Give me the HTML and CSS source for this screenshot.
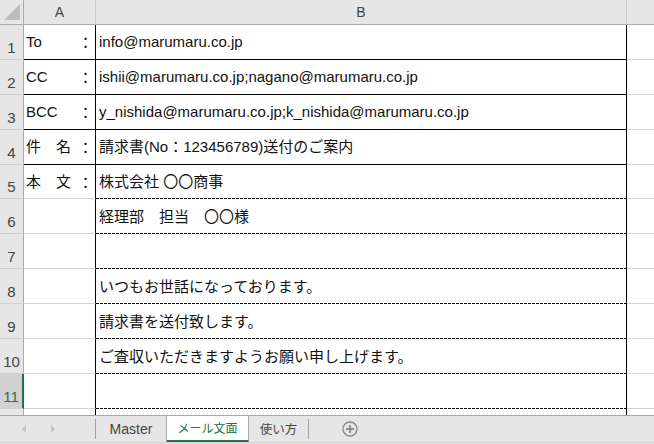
FILE: index.html
```html
<!DOCTYPE html>
<html lang="ja">
<head>
<meta charset="utf-8">
<title>メール文面</title>
<link rel="stylesheet" href="styles.css">
</head>
<body>
<div class="sheet">
  <div class="corner"><span class="tri"></span></div>
  <div class="colhead">A</div>
  <div class="colhead">B</div>
  <div class="colhead last"></div>

  <div class="rowhead">1</div>
  <div class="cell a solid"><span>To</span><span class="colon">：</span></div>
  <div class="cell b solid">info@marumaru.co.jp</div>
  <div class="cell c"></div>

  <div class="rowhead">2</div>
  <div class="cell a solid"><span>CC</span><span class="colon">：</span></div>
  <div class="cell b solid">ishii@marumaru.co.jp;nagano@marumaru.co.jp</div>
  <div class="cell c"></div>

  <div class="rowhead">3</div>
  <div class="cell a solid"><span>BCC</span><span class="colon">：</span></div>
  <div class="cell b solid">y_nishida@marumaru.co.jp;k_nishida@marumaru.co.jp</div>
  <div class="cell c"></div>

  <div class="rowhead">4</div>
  <div class="cell a solid"><span>件　名</span><span class="colon">：</span></div>
  <div class="cell b solid">請求書(No：123456789)送付のご案内</div>
  <div class="cell c"></div>

  <div class="rowhead">5</div>
  <div class="cell a"><span>本　文</span><span class="colon">：</span></div>
  <div class="cell b dash">株式会社 〇〇商事</div>
  <div class="cell c"></div>

  <div class="rowhead">6</div>
  <div class="cell a"></div>
  <div class="cell b dash">経理部　担当　〇〇様</div>
  <div class="cell c"></div>

  <div class="rowhead">7</div>
  <div class="cell a"></div>
  <div class="cell b dash"></div>
  <div class="cell c"></div>

  <div class="rowhead">8</div>
  <div class="cell a"></div>
  <div class="cell b dash">いつもお世話になっております。</div>
  <div class="cell c"></div>

  <div class="rowhead">9</div>
  <div class="cell a"></div>
  <div class="cell b dash">請求書を送付致します。</div>
  <div class="cell c"></div>

  <div class="rowhead">10</div>
  <div class="cell a"></div>
  <div class="cell b dash">ご査収いただきますようお願い申し上げます。</div>
  <div class="cell c"></div>

  <div class="rowhead selected">11</div>
  <div class="cell a"></div>
  <div class="cell b dash"></div>
  <div class="cell c"></div>

  <div class="rowhead partial"></div>
  <div class="cell a partial"></div>
  <div class="cell b partial"></div>
  <div class="cell c partial"></div>
</div>

<div class="tabbar">
  <div class="nav">
    <span class="arrow left"></span>
    <span class="arrow right"></span>
  </div>
  <span class="sep"></span>
  <div class="tab latin">Master</div>
  <div class="tab active">メール文面</div>
  <div class="tab jp">使い方</div>
  <span class="sep"></span>
  <div class="add">
    <svg width="16" height="16" viewBox="0 0 16 16">
      <circle cx="8" cy="8" r="7" fill="none" stroke="#8a8a8a" stroke-width="1.4"/>
      <path d="M8 4v8M4 8h8" stroke="#8a8a8a" stroke-width="1.8"/>
    </svg>
  </div>
</div>
</body>
</html>
```

FILE: styles.css
```css
* {
  box-sizing: border-box;
}

html {
  background: #e6e6e6;
}

body {
  margin: 0;
  width: 654px;
  height: 444px;
  overflow: hidden;
}

.sheet {
  display: grid;
  grid-template-columns: 24px 72px 531px 27px;
  grid-template-rows: 25px repeat(4, 35px) 34px repeat(6, 35px) 6px;
  background: #fff;
}

.corner {
  background: #e6e6e6;
  border-right: 1px solid #ababab;
  border-bottom: 1px solid #ababab;
  display: flex;
  align-items: flex-end;
  justify-content: flex-end;
  padding: 0 3px 4px 0;
}

.tri {
  width: 0;
  height: 0;
  border-left: 16px solid transparent;
  border-bottom: 16px solid #bcbcbc;
}

.colhead {
  background: #e6e6e6;
  border-right: 1px solid #cdcdcd;
  border-bottom: 1px solid #ababab;
  display: flex;
  align-items: center;
  justify-content: center;
  font: 14px/16px "Liberation Sans", "Noto Sans CJK JP", sans-serif;
  color: #444;
}

.colhead.last {
  border-right: none;
}

.rowhead {
  background: #e6e6e6;
  border-right: 1px solid #ababab;
  border-bottom: 1px solid #d0d0d0;
  display: flex;
  align-items: flex-end;
  justify-content: center;
  padding-bottom: 2px;
  font: 15px/18px "Liberation Sans", sans-serif;
  color: #444;
}

.rowhead.selected {
  background: #d2d2d2;
  color: #217346;
  border-right: 2px solid #217346;
}

.rowhead.partial {
  border-bottom: none;
}

.cell {
  display: flex;
  align-items: center;
  font: 15px/18px "Liberation Sans", "Noto Sans CJK JP", sans-serif;
  color: #111;
  white-space: nowrap;
  overflow: hidden;
  background: #fff;
}

.cell.a {
  border-right: 1px solid #000;
  border-bottom: 1px solid #d4d4d4;
  padding: 0 2px;
  justify-content: space-between;
}

.cell.b {
  border-right: 1px solid #000;
  padding: 0 0 0 3px;
}

.cell.c {
  border-bottom: 1px solid #d4d4d4;
}

.cell.solid {
  border-bottom: 1px solid #000;
}

.cell.dash {
  background-image: repeating-linear-gradient(90deg, #000 0 3px, transparent 3px 4px);
  background-size: 100% 1px;
  background-position: left bottom;
  background-repeat: no-repeat;
}

.cell.partial {
  border-bottom: none;
}

.colon {
  font-family: "Noto Sans CJK JP", sans-serif;
}

.tabbar {
  height: 28px;
  border-top: 1px solid #a6a6a6;
  border-bottom: 1px solid #cfcfcf;
  background: #e6e6e6;
  display: flex;
  align-items: stretch;
}

.nav {
  width: 95px;
  display: flex;
  align-items: center;
  padding-left: 22px;
  gap: 25px;
}

.arrow {
  width: 0;
  height: 0;
  border-top: 4px solid transparent;
  border-bottom: 4px solid transparent;
}

.arrow.left {
  border-right: 4px solid #c4c4c4;
}

.arrow.right {
  border-left: 4px solid #c4c4c4;
}

.sep {
  width: 1px;
  background: #a0a0a0;
  margin: 3px 0 3px;
}

.tab {
  display: flex;
  align-items: center;
  justify-content: center;
  border-right: 1px solid #ababab;
  color: #444;
  padding-bottom: 1px;
}

.tab.latin {
  width: 71px;
  font: 14px/16px "Liberation Sans", sans-serif;
}

.tab.active {
  width: 82px;
  background: #fff;
  color: #217346;
  border-bottom: 2px solid #217346;
  font: 12px/16px "Noto Sans CJK JP", sans-serif;
  margin-top: -1px;
  border-top: 1px solid #ababab;
}

.tab.jp {
  width: 59px;
  border-right: none;
  font: 12.5px/16px "Noto Sans CJK JP", sans-serif;
}

.add {
  display: flex;
  align-items: center;
  padding-left: 33px;
}

.add svg {
  display: block;
}
```
